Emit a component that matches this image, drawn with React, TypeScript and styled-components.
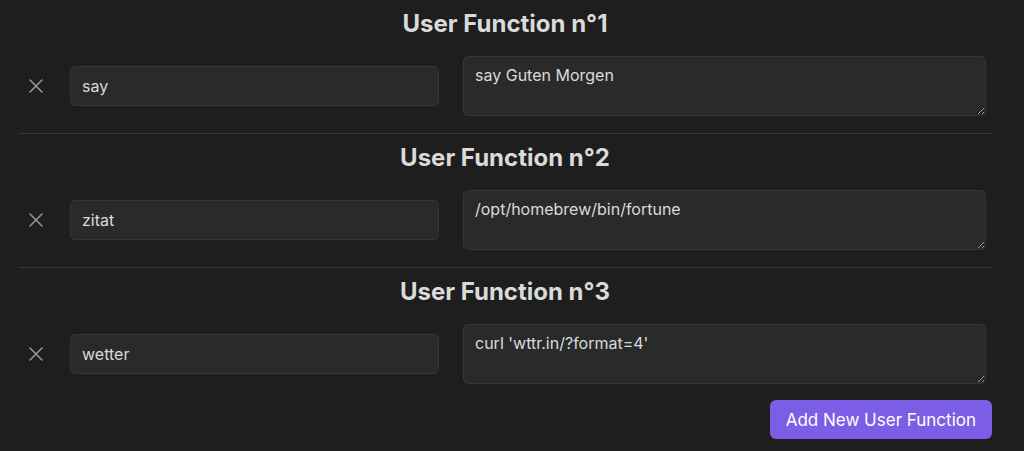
import styled, { createGlobalStyle } from 'styled-components';
import { X } from 'lucide-react';

type UserFunction = {
    name: string;
    command: string;
};

const functions: UserFunction[] = [
    { name: 'say', command: 'say Guten Morgen' },
    { name: 'zitat', command: '/opt/homebrew/bin/fortune' },
    { name: 'wetter', command: "curl 'wttr.in/?format=4'" },
];

const GlobalStyle = createGlobalStyle`
  html, body {
    margin: 0;
    padding: 0;
    background: #1e1e1e;
    color: #dadada;
    font-family: Inter, "Noto Sans", "Liberation Sans", sans-serif;
    color-scheme: dark;
  }
`;

export default function App() {
    return (
        <>
            <GlobalStyle/>
            <Container>
                {functions.map((fn, i) => (
                    <Section key={i} $last={i === functions.length - 1}>
                        <Title>User Function n°{i + 1}</Title>
                        <Row>
                            <RemoveButton aria-label="Remove">
                                <X size={24} strokeWidth={1.5}/>
                            </RemoveButton>
                            <NameInput defaultValue={fn.name} spellCheck={false}/>
                            <CommandArea defaultValue={fn.command} spellCheck={false}/>
                        </Row>
                    </Section>
                ))}
                <Footer>
                    <AddButton>Add New User Function</AddButton>
                </Footer>
            </Container>
        </>
    );
}

const Container = styled.div`
  margin: 0 32px 0 18px;
  display: flex;
  flex-direction: column;
`;

const Section = styled.div<{ $last: boolean }>`
  padding: 11px 0 ${({$last}) => ($last ? '16px' : '17px')};
  border-bottom: ${({$last}) => ($last ? 'none' : '1px solid #363636')};
  display: flex;
  flex-direction: column;
  gap: 19px;
`;

const Title = styled.h3`
  margin: 0;
  text-align: center;
  font-size: 24px;
  line-height: 26px;
  font-weight: 700;
  color: #dadada;
`;

const Row = styled.div`
  display: flex;
  align-items: center;
  padding-right: 6px;
`;

const RemoveButton = styled.button`
  width: 36px;
  height: 36px;
  margin-right: 16px;
  padding: 0;
  border: none;
  background: transparent;
  color: #9a9a9a;
  display: flex;
  align-items: center;
  justify-content: center;
  cursor: pointer;
`;

const NameInput = styled.input`
  box-sizing: border-box;
  width: 369px;
  height: 40px;
  margin-right: 24px;
  padding: 0 11px;
  background: #2a2a2a;
  border: 1px solid #363636;
  border-radius: 5px;
  color: #dadada;
  font-family: inherit;
  font-size: 16px;
  outline: none;
`;

const CommandArea = styled.textarea`
  box-sizing: border-box;
  flex: 1;
  height: 60px;
  padding: 7px 11px;
  background: #2a2a2a;
  border: 1px solid #363636;
  border-radius: 5px;
  color: #dadada;
  font-family: inherit;
  font-size: 16px;
  line-height: 22px;
  outline: none;
`;

const Footer = styled.div`
  display: flex;
  justify-content: flex-end;
`;

const AddButton = styled.button`
  height: 39px;
  padding: 0 16px;
  border: none;
  border-radius: 6px;
  background: #7b5de6;
  color: #ffffff;
  font-family: inherit;
  font-size: 17px;
  cursor: pointer;
`;
